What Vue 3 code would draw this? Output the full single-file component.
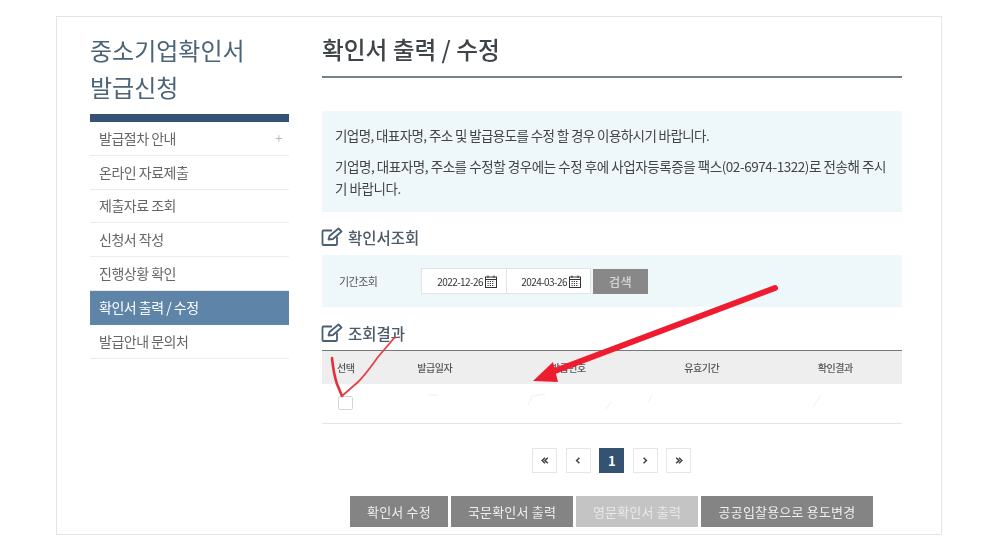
<script setup>
const menu = [
  { label: '발급절차 안내', plus: true },
  { label: '온라인 자료제출' },
  { label: '제출자료 조회' },
  { label: '신청서 작성' },
  { label: '진행상황 확인' },
  { label: '확인서 출력 / 수정', active: true },
  { label: '발급안내 문의처' }
]
const columns = ['선택', '발급일자', '발급번호', '유효기간', '확인결과']
const pages = [
  { id: 'first', icon: 'M7 1L3 5l4 4M11 1L7 5l4 4' },
  { id: 'prev', icon: 'M9 1L5 5l4 4' },
  { id: 'one', label: '1', current: true },
  { id: 'next', icon: 'M5 1l4 4-4 4' },
  { id: 'last', icon: 'M3 1l4 4-4 4M7 1l4 4-4 4' }
]
const actions = [
  { label: '확인서 수정', width: 98 },
  { label: '국문확인서 출력', width: 122 },
  { label: '영문확인서 출력', width: 122, disabled: true },
  { label: '공공입찰용으로 용도변경', width: 172 }
]
const dates = ['2022-12-26', '2024-03-26']
</script>

<template>
  <div class="page">
    <div class="frame">
      <aside class="side">
        <h2 class="side-title">중소기업확인서<br />발급신청</h2>
        <ul class="menu">
          <li v-for="m in menu" :key="m.label" class="menu-item" :class="{ active: m.active }">
            <span>{{ m.label }}</span>
            <span v-if="m.plus" class="plus">+</span>
          </li>
        </ul>
      </aside>

      <main class="main">
        <h1 class="title">확인서 출력 / 수정</h1>
        <div class="notice">
          <p>기업명, 대표자명, 주소 및 발급용도를 수정 할 경우 이용하시기 바랍니다.</p>
          <p class="wide">기업명, 대표자명, 주소를 수정할 경우에는 수정 후에 사업자등록증을 팩스(02-6974-1322)로 전송해 주시기 바랍니다.</p>
        </div>

        <h3 class="section first">
          <svg width="22" height="20" viewBox="0 0 22 20" fill="none" stroke="#4c6075" stroke-width="1.8">
            <path d="M11 3.5H2.5a1 1 0 0 0-1 1V17a1 1 0 0 0 1 1h12.5a1 1 0 0 0 1-1V9.5" />
            <path d="M7.5 12.5l1-3.5L17.5 1.5l3 3L12 12z" stroke-linejoin="round" />
          </svg>
          <span>확인서조회</span>
        </h3>
        <div class="search">
          <span class="search-label">기간조회</span>
          <div class="dates">
            <div v-for="d in dates" :key="d" class="date">
              <span>{{ d }}</span>
              <svg width="12" height="13" viewBox="0 0 12 13" fill="none" stroke="#333" stroke-width="1">
                <rect x="0.5" y="2" width="11" height="10.5" />
                <path d="M0.5 4.5h11M3 0.5v2.5M9 0.5v2.5" />
                <path d="M2.5 6.5h7M2.5 8.5h7M2.5 10.5h7" stroke-dasharray="1.2 1.1" />
              </svg>
            </div>
          </div>
          <button class="search-btn" type="button">검색</button>
        </div>

        <h3 class="section second">
          <svg width="22" height="20" viewBox="0 0 22 20" fill="none" stroke="#4c6075" stroke-width="1.8">
            <path d="M11 3.5H2.5a1 1 0 0 0-1 1V17a1 1 0 0 0 1 1h12.5a1 1 0 0 0 1-1V9.5" />
            <path d="M7.5 12.5l1-3.5L17.5 1.5l3 3L12 12z" stroke-linejoin="round" />
          </svg>
          <span>조회결과</span>
        </h3>
        <div class="table">
          <div class="thead">
            <span v-for="c in columns" :key="c" class="th">{{ c }}</span>
          </div>
          <div class="tbody">
            <span class="check"></span>
          </div>
        </div>

        <div class="pager">
          <span v-for="p in pages" :key="p.id" class="pg" :class="{ current: p.current }">
            <svg v-if="p.icon" width="10" height="7" viewBox="0 0 14 10" fill="none" stroke="#444" stroke-width="2.2">
              <path :d="p.icon" />
            </svg>
            <template v-else>{{ p.label }}</template>
          </span>
        </div>

        <div class="actions">
          <button
            v-for="a in actions"
            :key="a.label"
            type="button"
            class="action"
            :class="{ disabled: a.disabled }"
            :style="{ width: a.width + 'px' }"
          >{{ a.label }}</button>
        </div>
      </main>
    </div>

    <svg class="ink" width="985" height="548" viewBox="0 0 985 548" fill="none">
      <g stroke="#f5f5f5" stroke-width="1.5">
        <path d="M428 395h10M528 405l4-9 13-2M606 409l5-7M648 403l4-8M813 407l8-12" />
      </g>
      <path d="M775 288L552 372" stroke="#ee1c2e" stroke-width="6" stroke-linecap="round" />
      <path d="M533 381L553 362L558 382z" fill="#ee1c2e" />
      <path d="M332 358C333 368 335 378 337 384L342 396" stroke="#e5303c" stroke-width="2.6" stroke-linecap="round" />
      <path d="M342 396L358 382C366 374 372 365 378 357L395 337" stroke="#e5404a" stroke-width="1.8" stroke-linecap="round" />
    </svg>
  </div>
</template>

<style scoped>
.page {
  position: relative;
  width: 985px;
  height: 548px;
  overflow: hidden;
  background: #fff;
  font-family: "Noto Sans CJK KR", "Noto Sans", sans-serif;
  letter-spacing: -0.5px;
}
.frame {
  position: relative;
  top: 16px;
  left: 56px;
  box-sizing: border-box;
  width: 886px;
  height: 519px;
  padding: 0 39px 0 33px;
  border: 1px solid #e4e4e4;
  display: flex;
  gap: 33px;
  overflow: hidden;
  filter: blur(0.35px);
}
.side {
  width: 199px;
  flex: none;
}
.side-title {
  margin: 14px 0 9px;
  font-size: 24px;
  line-height: 37px;
  font-weight: 400;
  letter-spacing: 0;
  color: #4b6479;
}
.menu {
  list-style: none;
  margin: 0;
  padding: 0;
  border-top: 8px solid #355272;
}
.menu-item {
  box-sizing: border-box;
  height: 33.8px;
  padding: 0 7px 1px 9px;
  display: flex;
  align-items: center;
  justify-content: space-between;
  border-bottom: 1px solid #ececec;
  font-size: 14px;
  color: #666;
}
.menu-item.active {
  background: #5e84a8;
  color: #fff;
  border-bottom-color: #5e84a8;
}
.plus {
  font-size: 13px;
  color: #bbb;
}
.main {
  width: 580px;
  flex: none;
}
.title {
  margin: 0;
  height: 61px;
  box-sizing: border-box;
  padding-top: 14px;
  border-bottom: 2px solid #76828f;
  font-size: 23.7px;
  line-height: 36px;
  font-weight: 500;
  letter-spacing: 0;
  color: #3f4448;
}
.notice {
  margin-top: 33px;
  box-sizing: border-box;
  height: 101px;
  padding: 13px 13px 0;
  background: #eef7fa;
  font-size: 13.5px;
  line-height: 22px;
  color: #444;
  letter-spacing: -0.6px;
}
.notice p {
  margin: 0 0 9px;
}
.notice .wide {
  letter-spacing: -0.44px;
}
.section {
  margin: 0;
  height: 20px;
  display: flex;
  align-items: center;
  gap: 4px;
  font-size: 15.5px;
  font-weight: 500;
  letter-spacing: 0;
  color: #4c5a68;
}
.section svg {
  margin-left: -1px;
  margin-right: 1px;
}
.section.first {
  margin-top: 15px;
}
.section.second {
  margin-top: 16px;
}
.search {
  margin-top: 8px;
  height: 52px;
  display: flex;
  align-items: center;
  background: #eef7fa;
  padding-left: 17px;
}
.search-label {
  width: 82px;
  font-size: 11px;
  color: #555;
}
.dates {
  display: flex;
  height: 26px;
  background: #fff;
  border: 1px solid #dfe6ea;
  box-sizing: border-box;
}
.date {
  width: 84px;
  box-sizing: border-box;
  display: flex;
  align-items: center;
  justify-content: flex-end;
  gap: 2px;
  padding-right: 9px;
  font-size: 10px;
  letter-spacing: -0.55px;
  color: #333;
}
.date + .date {
  border-left: 1px solid #dfe6ea;
}
.search-btn {
  margin-left: 2px;
  width: 55px;
  height: 25px;
  border: 0;
  padding: 0;
  background: #888;
  color: #e4e4e4;
  font: inherit;
  font-size: 12px;
  letter-spacing: 0.5px;
}
.table {
  margin-top: 7px;
}
.thead {
  height: 34px;
  box-sizing: border-box;
  border-top: 1px solid #777;
  background: #eeeeee;
  display: grid;
  grid-template-columns: 46px repeat(4, 133.5px);
  align-items: center;
  font-size: 10px;
  font-weight: 500;
  color: #555;
}
.th {
  text-align: center;
}
.th:first-child {
  text-align: left;
  padding-left: 15px;
}
.tbody {
  height: 40px;
  box-sizing: border-box;
  border-bottom: 1px solid #e2e4e6;
  padding: 12px 0 0 16px;
}
.check {
  display: block;
  width: 13px;
  height: 12px;
  border: 1px solid #d5d5d5;
  border-radius: 2px;
}
.pager {
  margin-top: 24px;
  display: flex;
  gap: 8.5px;
  padding-left: 210px;
}
.pg {
  box-sizing: border-box;
  width: 25px;
  height: 25px;
  display: flex;
  align-items: center;
  justify-content: center;
  border: 1px solid #e6e6e6;
  font-size: 13px;
  line-height: 1;
  font-weight: 700;
  color: #555;
}
.pg.current {
  background: #355272;
  border-color: #355272;
  color: #fff;
}
.actions {
  margin-top: 23px;
  display: flex;
  gap: 3px;
  padding-left: 28px;
}
.action {
  height: 31px;
  border: 0;
  padding: 0;
  background: #848484;
  color: #eee;
  font: inherit;
  font-size: 13px;
  letter-spacing: 0.2px;
}
.action.disabled {
  background: #c4c4c4;
  color: #e9e9e9;
}
.ink {
  position: absolute;
  left: 0;
  top: 0;
  pointer-events: none;
}
</style>
